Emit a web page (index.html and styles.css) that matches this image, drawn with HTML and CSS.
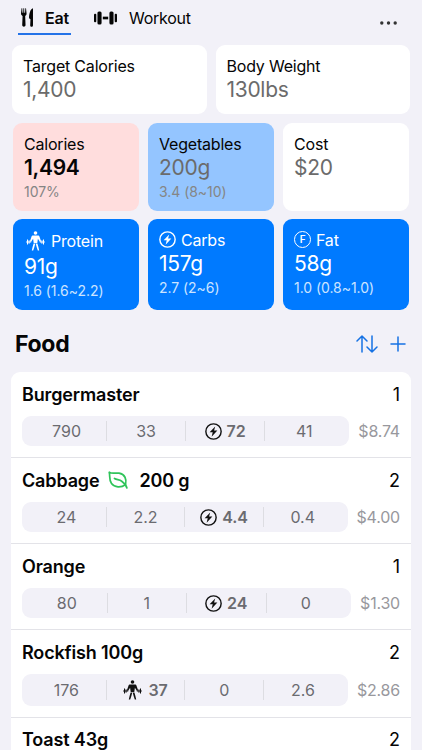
FILE: index.html
```
<!DOCTYPE html>
<html lang="en">
<head>
    <meta charset="UTF-8">
    <meta name="viewport" content="width=device-width, initial-scale=1.0">
    <title>Food</title>
    <link rel="stylesheet" href="styles.css">
</head>
<body>

<!-- shared icons -->
<svg class="sprite" width="0" height="0">
    <symbol id="bolt" viewBox="0 0 18 18">
        <circle cx="9" cy="9" r="8.1" fill="none" stroke="currentColor" stroke-width="1.5"/>
        <path d="M10.8 3.6 4.9 9.9h3.3L7 14.5 13.100 8H9.600z" fill="currentColor"/>
    </symbol>
    <symbol id="lifter" viewBox="0 0 19 20">
        <g fill="currentColor">
            <circle cx="9.5" cy="2" r="1.8"/>
            <path d="M7.2 4.6h4.6c1 0 1.5.5 1.8 1.400l1.500 4.300-1.100.8-2.100-3.400-.6 4.300H7.700l-.6-4.300L5 11.100l-1.100-.8L5.400 6c.3-.9.8-1.400 1.800-1.400z"/>
            <path d="M7.600 12.600h1.700l-1 3.600-1.100 3.300H5.800l.8-3.500zM9.700 12.600h1.700l1 3.400.8 3.500h-1.400l-1.100-3.300z"/>
            <path d="M.2 10.600h5v.9h-5zM13.800 10.600h5v.9h-5z"/>
            <path d="M1 8.600h1v4.900H1zM2.600 9.300h.9v3.500h-.9zM17 8.600h1v4.900h-1zM15.500 9.300h.9v3.500h-.9z"/>
        </g>
    </symbol>
</svg>

<header>
    <nav>
        <a class="tab active" href="#">
            <svg class="fork-icon" viewBox="0 0 14 21" fill="currentColor">
                <path d="M.6.5h.7l.3 5h.8L2.600.5h.8l.2 5h.8L4.700.5h.7l.6 5.800c0 1.500-.6 2.100-1.500 2.600l.4 9.800c0 2.200-3.600 2.200-3.600 0l.4-9.800C.8 8.400 0 7.800 0 6.300z"/>
                <path d="M12.900.6v18.200c0 2.200-3 2.200-3 0l.3-6.500-1.500-1C8.600 7 10 1.200 12.900.6z"/>
            </svg>
            <span>Eat</span>
        </a>
        <a class="tab" href="#">
            <svg class="dumbbell-icon" viewBox="0 0 24 14" fill="currentColor">
                <rect x="0" y="2.500" width="2.400" height="9" rx="1"/>
                <rect x="3.600" y=".3" width="4.300" height="13.400" rx="1.600"/>
                <rect x="9.200" y="5.600" width="5.600" height="2.800"/>
                <rect x="16.100" y=".3" width="4.300" height="13.400" rx="1.600"/>
                <rect x="21.600" y="2.500" width="2.400" height="9" rx="1"/>
            </svg>
            <span>Workout</span>
        </a>
    </nav>
    <button type="button" class="more">
        <svg viewBox="0 0 17 4" fill="currentColor">
            <circle cx="1.800" cy="2" r="1.700"/>
            <circle cx="8.500" cy="2" r="1.700"/>
            <circle cx="15.200" cy="2" r="1.700"/>
        </svg>
    </button>
</header>

<section class="goals">
    <div class="card">
        <h3>Target Calories</h3>
        <p class="value">1,400</p>
    </div>
    <div class="card">
        <h3>Body Weight</h3>
        <p class="value">130lbs</p>
    </div>
</section>

<section class="stats">
    <div class="card over">
        <h3>Calories</h3>
        <p class="value">1,494</p>
        <p class="note">107%</p>
    </div>
    <div class="card low">
        <h3>Vegetables</h3>
        <p class="value">200g</p>
        <p class="note">3.4 (8~10)</p>
    </div>
    <div class="card">
        <h3>Cost</h3>
        <p class="value">$20</p>
    </div>
</section>

<section class="stats macros">
    <div class="card met protein">
        <h3><svg class="lifter"><use href="#lifter"/></svg>Protein</h3>
        <p class="value">91g</p>
        <p class="note">1.6 (1.6~2.2)</p>
    </div>
    <div class="card met">
        <h3><svg class="round"><use href="#bolt"/></svg>Carbs</h3>
        <p class="value">157g</p>
        <p class="note">2.7 (2~6)</p>
    </div>
    <div class="card met">
        <h3><span class="letter">F</span>Fat</h3>
        <p class="value">58g</p>
        <p class="note">1.0 (0.8~1.0)</p>
    </div>
</section>

<div class="list-header">
    <h1>Food</h1>
    <svg class="sort-icon" viewBox="0 0 22 18">
        <path d="M6 17V1M1 6l5-5 5 5M16 1v16M11 12l5 5 5-5"/>
    </svg>
    <svg class="plus-icon" viewBox="0 0 16 16">
        <path d="M8 1v14M1 8h14"/>
    </svg>
</div>

<ul class="foods">
    <li>
        <div class="name"><h2>Burgermaster</h2><span>1</span></div>
        <div class="details">
            <div class="pill">
                <span>790</span>
                <span>33</span>
                <span class="top"><svg class="round"><use href="#bolt"/></svg>72</span>
                <span>41</span>
            </div>
            <span class="price">$8.74</span>
        </div>
    </li>
    <li>
        <div class="name">
            <h2>Cabbage</h2>
            <svg class="leaf" viewBox="0 0 20 18">
                <path d="M1.200 1.200C4 3.200 7.500 1.600 11 2.200c6 1 7.800 6 6.600 11.300C13 17 6.500 16.500 3.500 12.500.8 9 2.300 5 1.200 1.200z"/>
                <path d="M6.500 7.500c2.300 1.500 4.700.9 7.200 2.700 2.600 1.800 4.500 3.800 5.200 6.800"/>
            </svg>
            <h2>200 g</h2><span>2</span>
        </div>
        <div class="details">
            <div class="pill">
                <span>24</span>
                <span>2.2</span>
                <span class="top"><svg class="round"><use href="#bolt"/></svg>4.4</span>
                <span>0.4</span>
            </div>
            <span class="price">$4.00</span>
        </div>
    </li>
    <li>
        <div class="name"><h2>Orange</h2><span>1</span></div>
        <div class="details">
            <div class="pill">
                <span>80</span>
                <span>1</span>
                <span class="top"><svg class="round"><use href="#bolt"/></svg>24</span>
                <span>0</span>
            </div>
            <span class="price">$1.30</span>
        </div>
    </li>
    <li class="tall">
        <div class="name"><h2>Rockfish 100g</h2><span>2</span></div>
        <div class="details">
            <div class="pill">
                <span>176</span>
                <span class="top"><svg class="lifter"><use href="#lifter"/></svg>37</span>
                <span>0</span>
                <span>2.6</span>
            </div>
            <span class="price">$2.86</span>
        </div>
    </li>
    <li class="last">
        <div class="name"><h2>Toast 43g</h2><span>2</span></div>
    </li>
</ul>

</body>
</html>
```
FILE: styles.css
```
* {
    box-sizing: border-box;
}
body {
    font-family: Inter, "Liberation Sans", sans-serif;
    background-color: #f2f1f8;
    color: #050505;
    margin: 0;
}
h1, h2, h3, p, ul {
    margin: 0;
    padding: 0;
}
.sprite {
    display: block;
}
header {
    display: flex;
    justify-content: space-between;
    height: 45px;
    padding: 0 25px 0 18px;
}
nav {
    display: flex;
    gap: 23px;
}
.tab {
    display: flex;
    align-items: center;
    height: 35px;
    padding-top: 2px;
    border-bottom: 2px solid transparent;
    color: #050505;
    font-size: 16px;
    letter-spacing: -0.25px;
    text-decoration: none;
}
.tab.active {
    width: 53px;
    padding-left: 3px;
    border-color: #2473e8;
    font-weight: 600;
}
.fork-icon {
    width: 13px;
    height: 21px;
    margin-right: 11px;
}
.dumbbell-icon {
    width: 23px;
    height: 14px;
    margin-right: 12px;
}
.more {
    padding: 0;
    border: none;
    background: none;
    color: #333;
}
.more svg {
    display: block;
    width: 17px;
    height: 4px;
}
.goals {
    display: grid;
    grid-template-columns: 1fr 1fr;
    gap: 9px;
    padding: 0 12px;
    margin-bottom: 9px;
}
.goals .card {
    height: 69px;
}
.goals h3 {
    height: 22px;
}
.stats {
    display: grid;
    grid-template-columns: repeat(3, 1fr);
    gap: 9px;
    padding: 0 13px;
    margin-bottom: 8px;
}
.card {
    height: 88px;
    padding: 10px 11px;
    border-radius: 9px;
    background-color: white;
}
.card h3 {
    display: flex;
    align-items: center;
    height: 21px;
    font-size: 16px;
    font-weight: 400;
    letter-spacing: -0.2px;
}
.card .value {
    color: #6b6b6b;
    font-size: 21px;
    letter-spacing: -0.3px;
    line-height: 27px;
}
.card .note {
    color: #858585;
    font-size: 14px;
    letter-spacing: -0.05px;
    line-height: 21px;
}
.over {
    background-color: #ffdddd;
}
.card.over .value {
    color: #050505;
    font-weight: 600;
}
.low {
    background-color: #94c5ff;
}
.macros .card {
    height: 91px;
}
.met {
    background-color: #007aff;
    color: white;
}
.card.met .value {
    color: white;
}
.card.met .note {
    color: #cce4ff;
}
.card.protein h3 {
    height: 24px;
    padding-left: 2px;
}
.round {
    width: 17px;
    height: 17px;
    margin-right: 5px;
}
.lifter {
    width: 19px;
    height: 20px;
    margin-right: 6px;
}
.letter {
    width: 17px;
    height: 17px;
    margin-right: 5px;
    border: 1.4px solid;
    border-radius: 50%;
    font-size: 10px;
    font-weight: 600;
    line-height: 15px;
    text-align: center;
}
.list-header {
    display: flex;
    align-items: center;
    height: 51px;
    padding: 0 16px 0 15px;
    margin-bottom: 3px;
}
.list-header h1 {
    flex: 1;
    font-size: 23px;
    font-weight: 700;
    letter-spacing: -0.3px;
}
.list-header svg {
    fill: none;
    stroke: #1672e4;
    stroke-width: 1.5;
    stroke-linecap: round;
    stroke-linejoin: round;
}
.sort-icon {
    width: 22px;
    height: 18px;
    margin-right: 12px;
}
.plus-icon {
    width: 16px;
    height: 16px;
}
.foods {
    margin: 0 11px;
    border-radius: 9px 9px 0 0;
    background-color: white;
    list-style: none;
}
.foods li {
    height: 86px;
    padding: 10px 11px 0;
    border-bottom: 1px solid #e3e3e8;
}
.foods li.tall {
    height: 88px;
}
.foods li.last {
    height: 32px;
    border-bottom: none;
}
.name {
    display: flex;
    align-items: center;
    height: 24px;
    margin-bottom: 10px;
    font-size: 18px;
}
.last .name {
    height: 22px;
    margin-bottom: 0;
}
.name h2 {
    font-size: 18px;
    font-weight: 600;
    letter-spacing: -0.15px;
}
.name span {
    margin-left: auto;
}
.leaf {
    width: 20px;
    height: 18px;
    margin: 0 11px 0 9px;
    fill: none;
    stroke: #2fc45a;
    stroke-width: 1.7;
    stroke-linecap: round;
    stroke-linejoin: round;
}
.details {
    display: flex;
    align-items: center;
    justify-content: space-between;
}
.pill {
    flex: 1;
    display: grid;
    grid-template-columns: repeat(4, 1fr);
    align-items: center;
    height: 30px;
    margin-right: 9px;
    padding: 0 6px 0 5px;
    border-radius: 9px;
    background-color: #f2f1f8;
    color: #6b6b70;
    font-size: 16px;
}
.tall .pill {
    height: 32px;
}
.pill span {
    display: flex;
    align-items: center;
    justify-content: center;
    height: 20px;
    border-left: 1px solid #dddde2;
}
.pill span:first-child {
    border-left: none;
}
.pill .top {
    font-weight: 600;
}
.pill svg {
    color: #111;
}
.price {
    color: #98989d;
    font-size: 16px;
    letter-spacing: -0.2px;
}
```
